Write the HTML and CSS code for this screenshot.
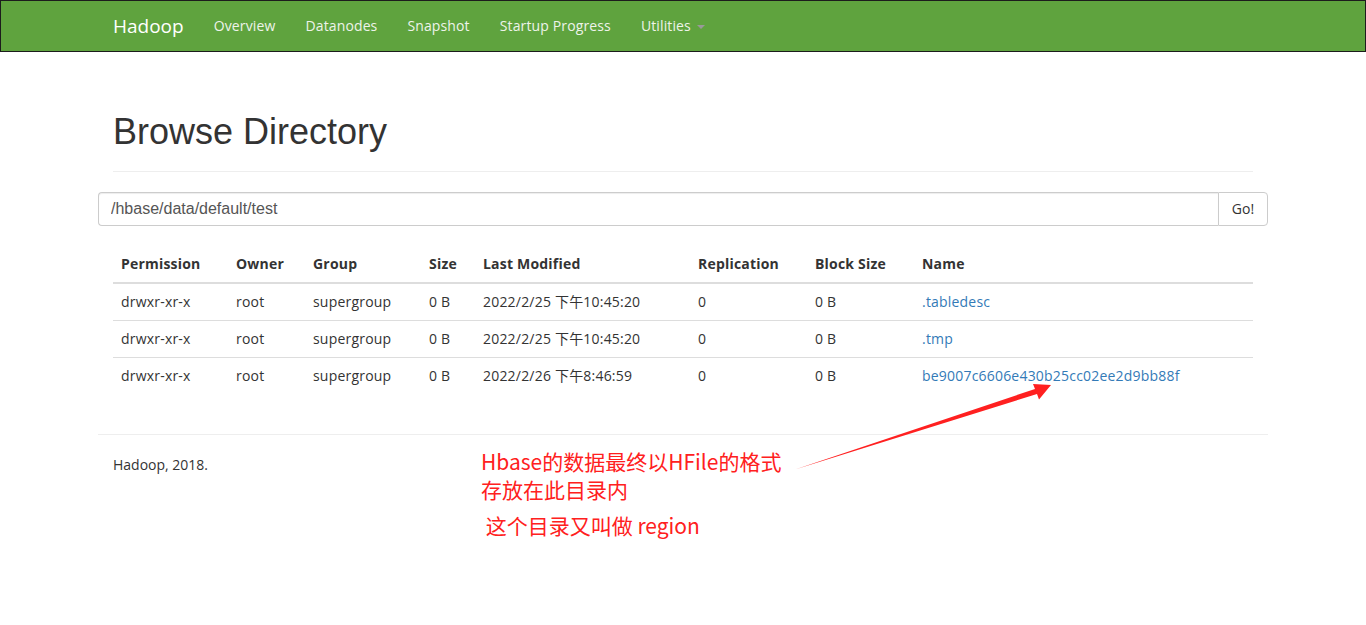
FILE: index.html
```html
<!DOCTYPE html>
<html lang="zh">
<head>
<meta charset="utf-8">
<title>Browsing HDFS</title>
<link rel="stylesheet" href="styles.css">
</head>
<body>
<header class="navbar">
  <div class="container nav-inner">
    <a class="brand" href="#">Hadoop</a>
    <ul class="nav">
      <li><a href="#">Overview</a></li>
      <li><a href="#">Datanodes</a></li>
      <li><a href="#">Snapshot</a></li>
      <li><a href="#">Startup Progress</a></li>
      <li><a href="#">Utilities <span class="caret"></span></a></li>
    </ul>
  </div>
</header>

<main class="container">
  <div class="page-header">
    <h1>Browse Directory</h1>
  </div>

  <form class="input-group">
    <input class="path-input" type="text" value="/hbase/data/default/test">
    <button class="go-btn" type="button">Go!</button>
  </form>

  <table class="listing">
    <colgroup>
      <col class="c-perm"><col class="c-owner"><col class="c-group"><col class="c-size">
      <col class="c-mod"><col class="c-rep"><col class="c-block"><col class="c-name">
    </colgroup>
    <thead>
      <tr>
        <th>Permission</th><th>Owner</th><th>Group</th><th>Size</th>
        <th>Last Modified</th><th>Replication</th><th>Block Size</th><th>Name</th>
      </tr>
    </thead>
    <tbody>
      <tr>
        <td>drwxr-xr-x</td><td>root</td><td>supergroup</td><td>0 B</td>
        <td>2022/2/25 下午10:45:20</td><td>0</td><td>0 B</td><td><a href="#">.tabledesc</a></td>
      </tr>
      <tr>
        <td>drwxr-xr-x</td><td>root</td><td>supergroup</td><td>0 B</td>
        <td>2022/2/25 下午10:45:20</td><td>0</td><td>0 B</td><td><a href="#">.tmp</a></td>
      </tr>
      <tr>
        <td>drwxr-xr-x</td><td>root</td><td>supergroup</td><td>0 B</td>
        <td>2022/2/26 下午8:46:59</td><td>0</td><td>0 B</td><td><a href="#">be9007c6606e430b25cc02ee2d9bb88f</a></td>
      </tr>
    </tbody>
  </table>
</main>

<footer class="container footer">
  <hr class="footer-rule">
  <p class="footer-text">Hadoop, 2018.</p>
</footer>

<div class="note">
  <div>Hbase的数据最终以HFile的格式</div>
  <div>存放在此目录内</div>
  <div class="note-gap">&nbsp;这个目录又叫做 region</div>
</div>

<svg class="arrow" width="280" height="110" viewBox="0 0 280 110" aria-hidden="true">
  <polygon points="15,99.5 257,24 259,29.5 271,15 253,14 255,19" fill="#ff2020"/>
</svg>
</body>
</html>
```

FILE: styles.css
```css
html, body {
  margin: 0;
  padding: 0;
  background: #fff;
}

body {
  position: relative;
  min-height: 625px;
  color: #333;
  font-family: "Open Sans", "Noto Sans CJK SC", sans-serif;
  font-size: 14px;
  line-height: 20px;
}

a {
  text-decoration: none;
}

.container {
  width: 1170px;
  margin: 0 auto;
  padding: 0 15px;
  box-sizing: border-box;
}

/* Navbar */
.navbar {
  background: #5fa33e;
  border: 1px solid #1c1c1c;
  height: 50px;
}

.nav-inner {
  display: flex;
  align-items: center;
  height: 50px;
}

.brand {
  color: #fff;
  font-size: 19px;
  line-height: 20px;
  padding: 15px 15px 15px 0;
}

.nav {
  display: flex;
  list-style: none;
  margin: 0;
  padding: 0;
}

.nav a {
  display: block;
  color: #eef3ea;
  padding: 15px;
  font-size: 14px;
  line-height: 20px;
  letter-spacing: 0.13px;
}

.caret {
  display: inline-block;
  width: 0;
  height: 0;
  margin-left: 2px;
  vertical-align: middle;
  border-top: 4px solid #999;
  border-left: 4px solid transparent;
  border-right: 4px solid transparent;
}

/* Header */
.page-header {
  margin-top: 60px;
  padding-bottom: 9px;
  border-bottom: 1px solid #eee;
}

.page-header h1 {
  margin: 0 0 10px;
  font-family: "Liberation Sans", Arial, sans-serif;
  font-weight: 400;
  font-size: 36px;
  line-height: 1.1;
  color: #333;
}

/* Path form */
.input-group {
  display: flex;
  margin: 20px -15px 0;
  height: 34px;
}

.path-input {
  flex: 1;
  min-width: 0;
  box-sizing: border-box;
  height: 34px;
  margin: 0;
  padding: 6px 12px;
  border: 1px solid #ccc;
  border-right: 0;
  border-radius: 4px 0 0 4px;
  box-shadow: inset 0 1px 1px rgba(0, 0, 0, 0.075);
  font-family: "Liberation Sans", Arial, sans-serif;
  font-size: 16px;
  color: #555;
  outline: none;
}

.go-btn {
  width: 50px;
  height: 34px;
  box-sizing: border-box;
  margin: 0;
  padding: 6px 0;
  background: #fff;
  border: 1px solid #ccc;
  border-radius: 0 4px 4px 0;
  font-family: "Open Sans", sans-serif;
  font-size: 14px;
  color: #333;
}

/* Table */
.listing {
  width: 100%;
  margin: 20px 0 20px;
  border-collapse: collapse;
  table-layout: fixed;
  letter-spacing: 0.2px;
}

.c-perm { width: 115px; }
.c-owner { width: 77px; }
.c-group { width: 116px; }
.c-size { width: 54px; }
.c-mod { width: 215px; }
.c-rep { width: 117px; }
.c-block { width: 107px; }
.c-name { width: auto; }

.listing th,
.listing td {
  padding: 8px;
  text-align: left;
  line-height: 20px;
  white-space: nowrap;
}

.listing th {
  font-weight: 700;
  border-bottom: 2px solid #ddd;
}

.listing td {
  border-top: 1px solid #ddd;
}

.listing tbody tr:first-child td {
  border-top: 0;
}

.listing a {
  color: #337ab7;
}

/* Footer */
.footer-rule {
  margin: 40px -15px 20px;
  border: 0;
  border-top: 1px solid #eee;
}

.footer-text {
  margin: 0 0 10px;
}

/* Annotation overlay */
.note {
  position: absolute;
  left: 481px;
  top: 447px;
  font-family: "Noto Sans CJK SC", "Open Sans", sans-serif;
  font-size: 21px;
  line-height: 28px;
  color: #ff2020;
  white-space: nowrap;
}

.note-gap {
  margin-top: 8px;
}

.arrow {
  position: absolute;
  left: 780px;
  top: 370px;
}
```
